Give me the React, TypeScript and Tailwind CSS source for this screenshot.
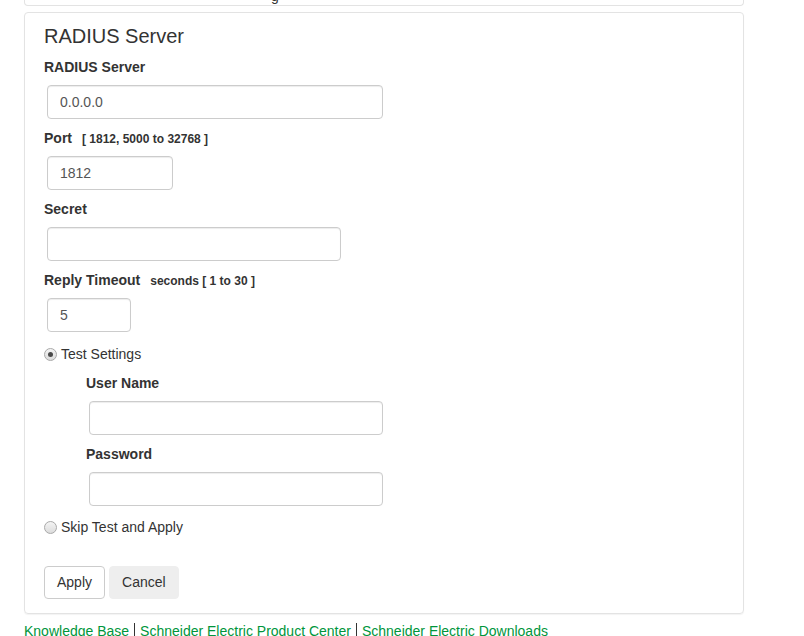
import React, { useState } from "react";

const font = { fontFamily: '"Liberation Sans", Arial, sans-serif' };

function Label({ text, hint }: { text: string; hint?: string }) {
  return (
    <div className="mt-[9px] h-[20px] leading-[20px] text-[14px] font-bold text-[#333] whitespace-nowrap">
      {text}
      {hint && <span className="ml-[10px] text-[12px]">{hint}</span>}
    </div>
  );
}

function Field({ width, value }: { width: string; value?: string }) {
  return (
    <input
      defaultValue={value}
      className={`${width} mt-[8px] ml-[3px] block h-[34px] rounded-[4px] border border-[#ccc] bg-white px-[12px] text-[14px] text-[#555] outline-none shadow-[inset_0_1px_1px_rgba(0,0,0,0.075)]`}
      style={font}
    />
  );
}

function Radio({ checked, label, onClick }: { checked: boolean; label: string; onClick: () => void }) {
  return (
    <div className="flex h-[20px] items-center text-[14px] text-[#333] cursor-pointer" onClick={onClick}>
      <span className="flex h-[13px] w-[13px] items-center justify-center rounded-full border border-[#a9a9a9] bg-gradient-to-b from-[#f4f4f4] to-[#dcdcdc]">
        {checked && <span className="h-[5px] w-[5px] rounded-full bg-[#4a4a4a]" />}
      </span>
      <span className="ml-[4px]">{label}</span>
    </div>
  );
}

export default function App() {
  const [mode, setMode] = useState<"test" | "skip">("test");

  return (
    <div className="h-[636px] w-[804px] overflow-hidden bg-white" style={font}>
      {/* tail of the panel above */}
      <div className="ml-[24px] w-[720px] h-[6px] rounded-b-[4px] border border-t-0 border-[#e3e3e3] relative">
        <span className="absolute left-[246px] top-[-14px] text-[14px] text-[#333]">g</span>
      </div>

      {/* RADIUS panel */}
      <div className="ml-[24px] mt-[6px] w-[720px] rounded-[4px] border border-[#e3e3e3] px-[19px] pt-[11px] pb-[14px] shadow-[0_1px_1px_rgba(0,0,0,0.05)]">
        <h3 className="h-[24px] leading-[24px] text-[20px] text-[#333]">RADIUS Server</h3>

        <Label text="RADIUS Server" />
        <Field width="w-[336px]" value="0.0.0.0" />

        <Label text="Port" hint="[ 1812, 5000 to 32768 ]" />
        <Field width="w-[126px]" value="1812" />

        <Label text="Secret" />
        <Field width="w-[294px]" />

        <Label text="Reply Timeout" hint="seconds [ 1 to 30 ]" />
        <Field width="w-[84px]" value="5" />

        <div className="mt-[12px]">
          <Radio checked={mode === "test"} label="Test Settings" onClick={() => setMode("test")} />
        </div>

        <div className="ml-[42px]">
          <Label text="User Name" />
          <Field width="w-[294px]" />
          <Label text="Password" />
          <Field width="w-[294px]" />
        </div>

        <div className="mt-[11px]">
          <Radio checked={mode === "skip"} label="Skip Test and Apply" onClick={() => setMode("skip")} />
        </div>

        <div className="mt-[29px] flex gap-[4px]">
          <button className="h-[33px] rounded-[4px] border border-[#ccc] bg-white px-[12px] text-[14px] text-[#333]">
            Apply
          </button>
          <button className="h-[33px] rounded-[4px] border border-[#eee] bg-[#eee] px-[12px] text-[14px] text-[#333]">
            Cancel
          </button>
        </div>
      </div>

      {/* Footer links */}
      <div className="ml-[24px] mt-[9px] flex items-center text-[14px] leading-[16px] text-[#00953b] whitespace-nowrap">
        <a>Knowledge Base</a>
        <span className="ml-[5px] mr-[5px] h-[16px] w-px bg-[#333]" />
        <a>Schneider Electric Product Center</a>
        <span className="ml-[5px] mr-[5px] h-[16px] w-px bg-[#333]" />
        <a>Schneider Electric Downloads</a>
      </div>
    </div>
  );
}
